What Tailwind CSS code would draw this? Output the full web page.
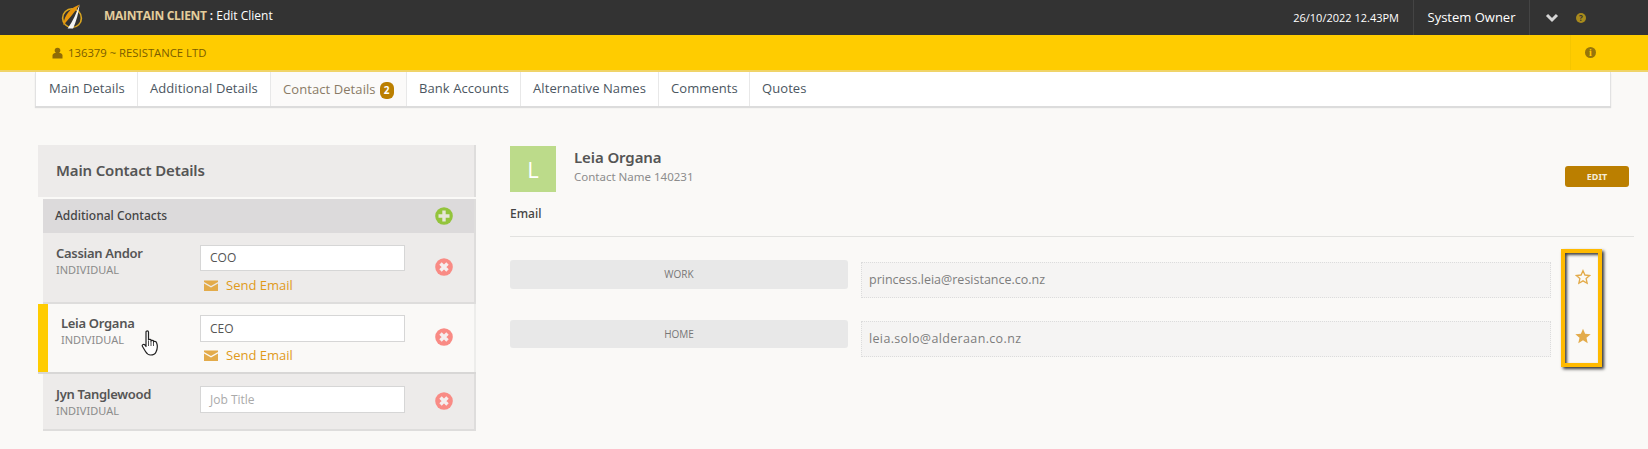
<!DOCTYPE html>
<html><head><meta charset="utf-8">
<script src="https://cdn.jsdelivr.net/npm/@tailwindcss/browser@4"></script>
</head>
<body class="m-0 bg-[#faf9f7] font-['Open_Sans',sans-serif] overflow-hidden">
<div class="relative w-[1648px] h-[449px] overflow-hidden">
  <!-- top bar -->
  <header class="h-[35px] bg-[#333333] flex items-center text-white">
    <div class="w-[98px] pl-[60px] pb-[3px] flex items-center">
      <svg width="24" height="27" viewBox="0 0 22 24"><circle cx="11" cy="13.5" r="8.6" fill="none" stroke="#d9a520" stroke-width="1.5"/><path d="M18 1 C10 4 4 10 3 20 C8 14 13 9 18 1Z" fill="#e8960c"/><path d="M18 1 C15 9 12 16 7 23 L12 23 C15 16 17 9 18 1Z" fill="#f4f4f4"/></svg>
    </div>
    <div class="pl-[6px] pb-[4px] text-[12px] leading-none"><span class="font-bold text-[#e3cd9c] tracking-[-0.3px]">MAINTAIN CLIENT</span><span class="font-semibold"> : </span><span>Edit Client</span></div>
    <div class="ml-auto flex items-center h-full">
      <div class="text-[11px] pr-[14px] pt-[1px]">26/10/2022 12.43PM</div>
      <div class="h-full border-l border-r border-[#444] w-[117px] flex items-center justify-center text-[13px]">System Owner</div>
      <svg class="ml-[15px]" width="14" height="10" viewBox="0 0 14 10"><path d="M2 2 L7 7 L12 2" fill="none" stroke="#d6d6d6" stroke-width="3"/></svg>
      <div class="ml-[17px] mr-[62px] w-[10px] h-[10px] rounded-full bg-[#a88a1c] text-[#333] text-[8px] font-bold leading-[10px] text-center">?</div>
    </div>
  </header>
  <!-- client bar -->
  <div class="h-[37px] bg-[#ffcc00] border-b-2 border-[#f0d468] flex items-center text-[#7a5c00]">
    <svg class="ml-[52px]" width="11" height="12" viewBox="0 0 11 11"><circle cx="5.5" cy="3" r="2.8" fill="#8f6b06"/><path d="M0.5 11 V8 C0.5 6.5 2 5.5 3 5.5 H8 C9 5.5 10.5 6.5 10.5 8 V11Z" fill="#8f6b06"/></svg>
    <span class="ml-[5px] pt-[2px] text-[11.3px]">136379 ~ RESISTANCE LTD</span>
    <div class="ml-auto h-full w-[78px] border-l border-[#f5c600] flex items-center pl-[14px]">
      <div class="w-[11px] h-[11px] rounded-full bg-[#96750a] text-[#ffcc00] text-[10px] font-bold leading-[11px] text-center font-['Liberation_Serif',serif]">i</div>
    </div>
  </div>
  <!-- tabs -->
  <nav class="ml-[35px] w-[1576px] h-[34px] bg-white border-l border-r border-[#e2e2e2] shadow-[0_2px_1px_#dcdcdc] flex text-[13px] tracking-[0.08px] text-[#4b5661]">
    <div class="w-[102px] border-r border-[#e8e8e8] flex items-center pl-[13px] pb-[1px]">Main Details</div>
    <div class="w-[133px] border-r border-[#e8e8e8] flex items-center pl-[12px] pb-[1px]">Additional Details</div>
    <div class="w-[136px] border-r border-[#e8e8e8] bg-[#fbfaf9] flex items-center pl-[12px] pt-[2px] text-[#8a7a66]">Contact Details<span class="ml-[4px] w-[14px] h-[17px] rounded-[6px] bg-[#bb7f00] text-white text-[10px] font-bold flex items-center justify-center">2</span></div>
    <div class="w-[114px] border-r border-[#e8e8e8] flex items-center pl-[12px] pb-[1px]">Bank Accounts</div>
    <div class="w-[138px] border-r border-[#e8e8e8] flex items-center pl-[12px] pb-[1px]">Alternative Names</div>
    <div class="w-[91px] border-r border-[#e8e8e8] flex items-center pl-[12px] pb-[1px]">Comments</div>
    <div class="flex items-center pl-[12px] pb-[1px]">Quotes</div>
  </nav>
  <!-- content -->
  <main class="flex mt-[39px] pl-[38px]">
    <!-- left -->
    <section class="w-[438px] shrink-0 font-['Noto_Sans',sans-serif]">
      <div class="h-[52px] bg-[#edebea] border-r-2 border-[#dedddc] flex items-center pl-[18px] pb-[2px] text-[15px] tracking-[-0.15px] font-semibold text-[#555]">Main Contact Details</div>
      <div class="ml-[5px] mt-[2px] h-[34px] bg-[#dcdadb] border-r-2 border-[#dedddc] flex items-center justify-between pl-[12px] pr-[21px] text-[12px] font-medium text-[#444]">
        <span>Additional Contacts</span>
        <svg width="18" height="18" viewBox="0 0 18 18"><circle cx="9" cy="9" r="8.8" fill="#93c43c"/><path d="M9 3.5 V14.5 M3.5 9 H14.5" stroke="#e6e6d8" stroke-width="3.4"/></svg>
      </div>
      <!-- Cassian -->
      <div class="ml-[5px] h-[71px] bg-[#edebea] border-r-2 border-b-2 border-[#dedddc] flex pl-[13px] pr-[21px]">
        <div class="w-[144px] pt-[11px]"><div class="text-[13px] leading-[18px] tracking-[-0.3px] font-semibold text-[#555]">Cassian Andor</div><div class="text-[11px] leading-[15px] text-[#8b8b8b]">INDIVIDUAL</div></div>
        <div class="w-[205px] pt-[12px]">
          <div class="h-[26px] bg-white border border-[#d6d6d6] flex items-center pl-[9px] text-[12px] text-[#555] font-['Open_Sans',sans-serif]">COO</div>
          <div class="mt-[5px] pl-[4px] flex items-center gap-[8px] text-[13px] text-[#e09a1a] font-['Open_Sans',sans-serif]">
            <svg width="14" height="11" viewBox="0 0 14 11"><path d="M0 0.5 H14 V2 L7 6 L0 2Z M0 3.6 L7 7.6 L14 3.6 V11 H0Z" fill="#e3ab4a"/></svg>
            Send Email
          </div>
        </div>
        <div class="ml-auto pt-[25px]"><svg width="18" height="18" viewBox="0 0 18 18"><circle cx="9" cy="9" r="8.8" fill="#f98b85"/><path d="M5.5 5.5 L12.5 12.5 M12.5 5.5 L5.5 12.5" stroke="#f5eeee" stroke-width="3.4"/></svg></div>
      </div>
      <!-- Leia -->
      <div class="h-[70px] border-b-2 border-[#d8d7d6] flex">
        <div class="w-[10px] bg-[#ffcc00]"></div>
        <div class="flex flex-1 pl-[13px] pr-[21px] border-r-2 border-[#ededeb]">
          <div class="w-[139px] pt-[10px]"><div class="text-[13px] leading-[18px] tracking-[-0.3px] font-semibold text-[#555]">Leia Organa</div><div class="text-[11px] leading-[15px] text-[#8b8b8b]">INDIVIDUAL</div></div>
          <div class="w-[205px] pt-[11px]">
            <div class="h-[27px] bg-white border border-[#d6d6d6] flex items-center pl-[9px] text-[12px] text-[#555] font-['Open_Sans',sans-serif]">CEO</div>
            <div class="mt-[4px] pl-[4px] flex items-center gap-[8px] text-[13px] text-[#e09a1a] font-['Open_Sans',sans-serif]">
              <svg width="14" height="11" viewBox="0 0 14 11"><path d="M0 0.5 H14 V2 L7 6 L0 2Z M0 3.6 L7 7.6 L14 3.6 V11 H0Z" fill="#e3ab4a"/></svg>
              Send Email
            </div>
          </div>
          <div class="ml-auto pt-[24px]"><svg width="18" height="18" viewBox="0 0 18 18"><circle cx="9" cy="9" r="8.8" fill="#f98b85"/><path d="M5.5 5.5 L12.5 12.5 M12.5 5.5 L5.5 12.5" stroke="#f5eeee" stroke-width="3.4"/></svg></div>
        </div>
      </div>
      <!-- Jyn -->
      <div class="ml-[5px] h-[57px] bg-[#edebea] border-r-2 border-b-2 border-[#dedddc] flex pl-[13px] pr-[21px]">
        <div class="w-[144px] pt-[11px]"><div class="text-[13px] leading-[18px] tracking-[-0.3px] font-semibold text-[#555]">Jyn Tanglewood</div><div class="text-[11px] leading-[15px] text-[#8b8b8b]">INDIVIDUAL</div></div>
        <div class="w-[205px] pt-[12px]">
          <div class="h-[27px] bg-white border border-[#d6d6d6] flex items-center pl-[9px] text-[12px] text-[#aaa] font-['Open_Sans',sans-serif]">Job Title</div>
        </div>
        <div class="ml-auto pt-[18px]"><svg width="18" height="18" viewBox="0 0 18 18"><circle cx="9" cy="9" r="8.8" fill="#f98b85"/><path d="M5.5 5.5 L12.5 12.5 M12.5 5.5 L5.5 12.5" stroke="#f5eeee" stroke-width="3.4"/></svg></div>
      </div>
    </section>
    <!-- right -->
    <section class="ml-[34px] w-[1124px] shrink-0">
      <div class="flex h-[46px] mt-[1px] font-['Noto_Sans',sans-serif]">
        <div class="w-[46px] h-[46px] bg-[#bcdb8a] text-white text-[22px] flex items-center justify-center font-['Open_Sans',sans-serif]">L</div>
        <div class="ml-[18px]"><div class="text-[15px] leading-[23px] tracking-[-0.1px] font-semibold text-[#555]">Leia Organa</div><div class="text-[11.5px] leading-[16px] text-[#8c8c8c]">Contact Name 140231</div></div>
        <div class="ml-auto mr-[5px] mt-[20px] w-[64px] h-[21px] rounded-[3px] bg-[#bb7f00] text-[#f5ecd8] text-[9px] font-bold flex items-center justify-center">EDIT</div>
      </div>
      <div class="h-[45px] border-b border-[#e2e2e0] pt-[13px] text-[12px] leading-[18px] font-medium text-[#444] font-['Noto_Sans',sans-serif]">Email</div>
      <div class="flex mt-[23px] h-[39px]">
        <div class="w-[338px] h-[29px] rounded-[3px] bg-[#e8e8e8] text-[10px] text-[#777] flex items-center justify-center">WORK</div>
        <div class="ml-[13px] mt-[2px] w-[690px] h-[36px] bg-[#f5f4f3] border border-dotted border-[#dcdcdc] flex items-center pl-[7px] text-[12.5px] text-[#7d7d7d]">princess.leia@resistance.co.nz</div>
        <svg class="ml-[24px] mt-[9px]" width="16" height="16" viewBox="0 0 24 24"><path d="M12 2.5 L14.9 9 L22 9.7 L16.7 14.4 L18.2 21.4 L12 17.8 L5.8 21.4 L7.3 14.4 L2 9.7 L9.1 9Z" fill="none" stroke="#e3ab4a" stroke-width="2"/></svg>
      </div>
      <div class="flex mt-[21px] h-[39px]">
        <div class="w-[338px] h-[28px] rounded-[3px] bg-[#e8e8e8] text-[10px] text-[#777] flex items-center justify-center">HOME</div>
        <div class="ml-[13px] mt-[1px] w-[690px] h-[36px] bg-[#f5f4f3] border border-dotted border-[#dcdcdc] flex items-center pl-[7px] text-[12.5px] tracking-[0.35px] text-[#7d7d7d]">leia.solo@alderaan.co.nz</div>
        <svg class="ml-[24px] mt-[8px]" width="16" height="16" viewBox="0 0 24 24"><path d="M12 1 L15.2 8.6 L23.5 9.3 L17.2 14.7 L19.1 22.8 L12 18.5 L4.9 22.8 L6.8 14.7 L0.5 9.3 L8.8 8.6Z" fill="#e3ab4a"/></svg>
      </div>
    </section>
  </main>
  <!-- annotation -->
  <div class="absolute left-[1561px] top-[249px] w-[41px] h-[118px] border-[4px] border-[#ffba00] shadow-[2px_2px_3px_#333,inset_2px_2px_3px_#444]"></div>
  <!-- cursor -->
  <svg class="absolute left-[141px] top-[330px]" width="20" height="26" viewBox="0 0 20 26"><path d="M5 2 C5 0.5 7.5 0.5 7.5 2 V10 C7.5 9 10 9 10 10 V11 C10 10 12.5 10 12.5 11 V12 C12.5 11 15 11 15.5 12.5 C16.5 15 16.5 19 15 22 C14 24.5 12 25 9.5 25 C7 25 6 24 4.5 21.5 L1.5 16.5 C0.5 15 2.5 13.5 4 15 L5 16.5Z" fill="#fff" stroke="#222" stroke-width="1.2" stroke-linejoin="round"/><path d="M7.5 11 V16 M10 11 V16 M12.5 12 V16" stroke="#222" stroke-width="0.8"/></svg>
</div>
</body></html>
